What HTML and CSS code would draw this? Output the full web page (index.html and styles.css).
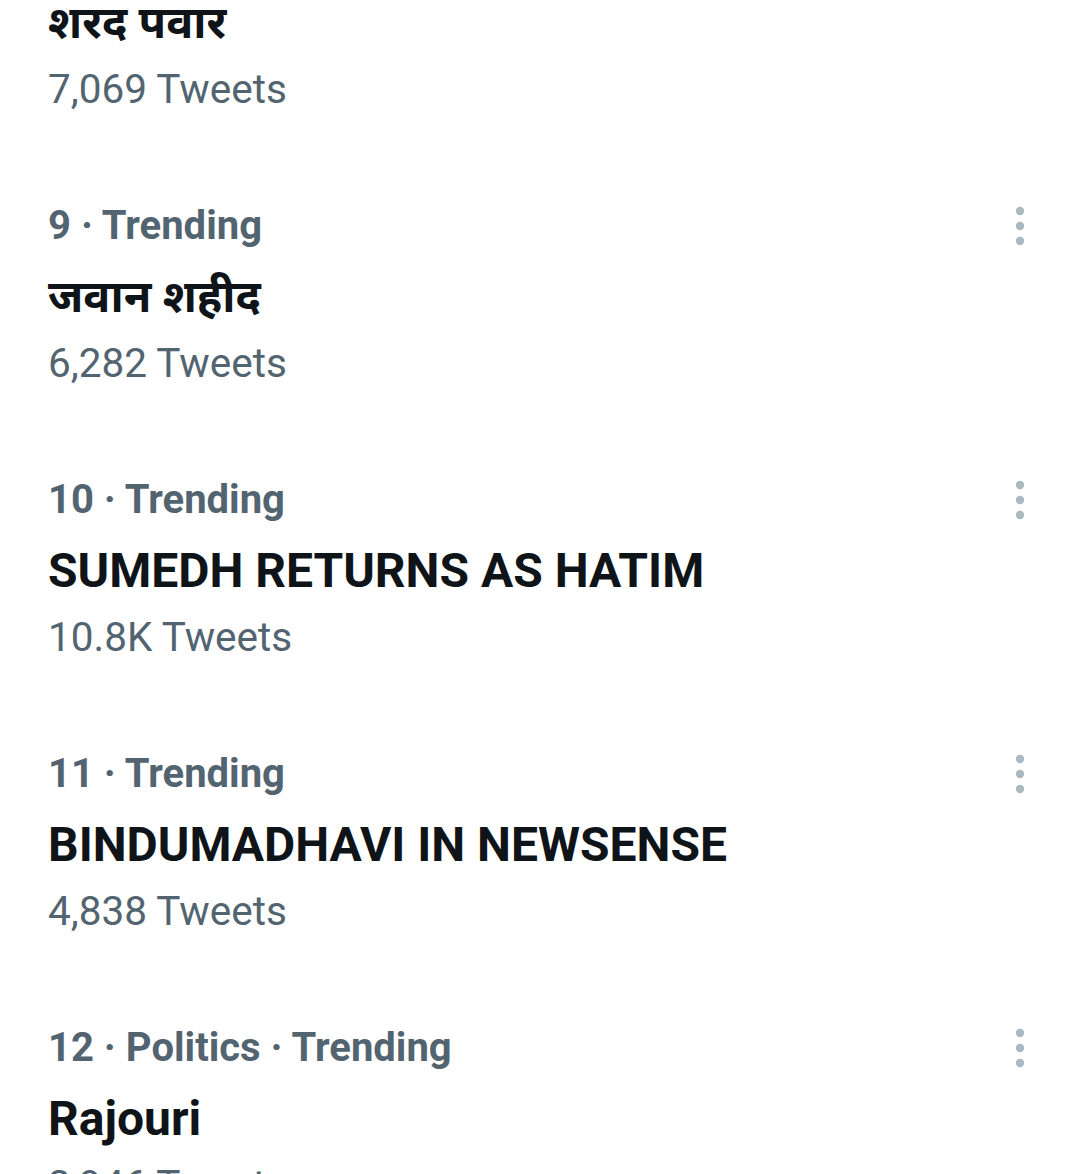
FILE: index.html
```html
<!DOCTYPE html>
<html lang="en">

<head>
    <meta charset="UTF-8">
    <meta name="viewport" content="width=device-width, initial-scale=1.0">
    <title>Trending</title>
    <link rel="stylesheet" href="styles.css">
</head>

<body>
    <div class="trends">
        <!-- 8: scrolled partly out of view -->
        <div class="trend">
            <div class="trend-body">
                <p class="trend-meta">8 · Trending</p>
                <p class="trend-title hindi" lang="hi">शरद पवार</p>
                <p class="trend-count">7,069 Tweets</p>
            </div>
            <div class="more">
                <svg viewBox="0 0 12 42" width="12" height="42"><circle cx="6" cy="6" r="4.2"/><circle cx="6" cy="21" r="4.2"/><circle cx="6" cy="36" r="4.2"/></svg>
            </div>
        </div>

        <div class="trend">
            <div class="trend-body">
                <p class="trend-meta">9 · Trending</p>
                <p class="trend-title hindi" lang="hi">जवान शहीद</p>
                <p class="trend-count">6,282 Tweets</p>
            </div>
            <div class="more">
                <svg viewBox="0 0 12 42" width="12" height="42"><circle cx="6" cy="6" r="4.2"/><circle cx="6" cy="21" r="4.2"/><circle cx="6" cy="36" r="4.2"/></svg>
            </div>
        </div>

        <div class="trend">
            <div class="trend-body">
                <p class="trend-meta">10 · Trending</p>
                <p class="trend-title">SUMEDH RETURNS AS HATIM</p>
                <p class="trend-count">10.8K Tweets</p>
            </div>
            <div class="more">
                <svg viewBox="0 0 12 42" width="12" height="42"><circle cx="6" cy="6" r="4.2"/><circle cx="6" cy="21" r="4.2"/><circle cx="6" cy="36" r="4.2"/></svg>
            </div>
        </div>

        <div class="trend">
            <div class="trend-body">
                <p class="trend-meta">11 · Trending</p>
                <p class="trend-title">BINDUMADHAVI IN NEWSENSE</p>
                <p class="trend-count">4,838 Tweets</p>
            </div>
            <div class="more">
                <svg viewBox="0 0 12 42" width="12" height="42"><circle cx="6" cy="6" r="4.2"/><circle cx="6" cy="21" r="4.2"/><circle cx="6" cy="36" r="4.2"/></svg>
            </div>
        </div>

        <div class="trend">
            <div class="trend-body">
                <p class="trend-meta">12 · Politics · Trending</p>
                <p class="trend-title">Rajouri</p>
                <p class="trend-count">3,946 Tweets</p>
            </div>
            <div class="more">
                <svg viewBox="0 0 12 42" width="12" height="42"><circle cx="6" cy="6" r="4.2"/><circle cx="6" cy="21" r="4.2"/><circle cx="6" cy="36" r="4.2"/></svg>
            </div>
        </div>
    </div>
</body>

</html>
```

FILE: styles.css
```css
* {
    margin: 0;
    padding: 0;
    box-sizing: border-box;
    font-family: Roboto, 'Noto Sans', 'Noto Sans Devanagari', sans-serif;
}

body {
    background-color: #ffffff;
    overflow: hidden;
    height: 1174px;
}

.trends {
    margin-top: -116px;
}

.trend {
    display: flex;
    align-items: flex-start;
    padding: 42px 54px 43px 48px;
}

.trend-body {
    flex: 1;
}

.trend-meta {
    color: #536471;
    font-size: 40px;
    font-weight: 700;
    line-height: 52px;
}

.trend-title {
    color: #0f1419;
    font-size: 48px;
    font-weight: 700;
    line-height: 60px;
    margin-top: 15px;
}

.trend-title.hindi {
    font-size: 45px;
}

.trend-count {
    color: #536471;
    font-size: 40.5px;
    line-height: 52px;
    margin-top: 10px;
}

.more {
    height: 52px;
    display: flex;
    align-items: center;
}

.more svg {
    fill: #aab8c2;
}
```
